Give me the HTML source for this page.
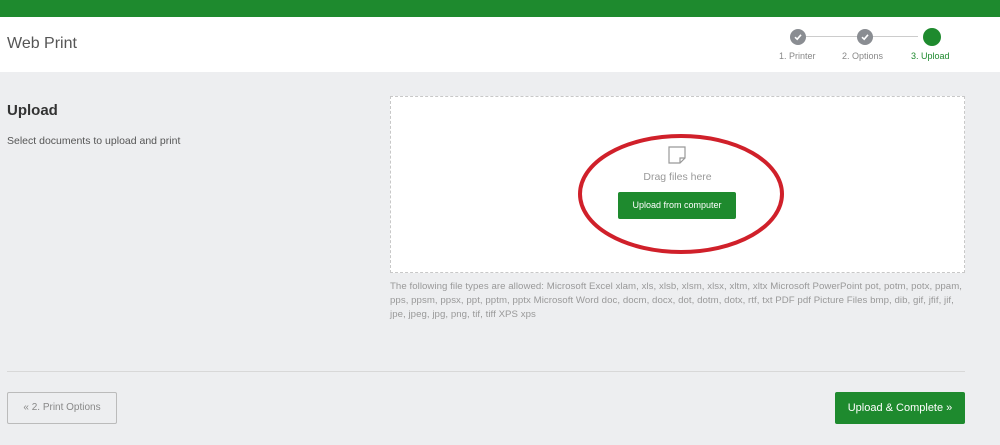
<!DOCTYPE html>
<html><head><style>
*{margin:0;padding:0;box-sizing:border-box}
body{width:1000px;height:445px;background:#edeef0;font-family:"Liberation Sans",sans-serif;position:relative;overflow:hidden;color:#333}
.top{position:absolute;left:0;top:0;width:1000px;height:17px;background:#1e8a2e}
.hdr{position:absolute;left:0;top:17px;width:1000px;height:55px;background:#fff}
.abs{position:absolute}
.dot{position:absolute;width:16px;height:16px;border-radius:50%;background:#8a8d92;top:29px}
.dot svg{position:absolute;left:3px;top:3px}
.lbl{position:absolute;top:51px;font-size:9px;color:#888}
.drop{position:absolute;left:390px;top:96px;width:575px;height:177px;background:#fff;border:1px dashed #c8c8c8}
.ft{position:absolute;left:390px;top:279px;width:600px;font-size:8.9px;line-height:14px;color:#999;white-space:nowrap;letter-spacing:0.05px}
.ft span{display:inline-block;transform-origin:0 0;transform:scaleX(1.085)}
.btn{position:absolute;border-radius:2px;font-size:11px;text-align:center}
</style></head><body>
<div class="top"></div>
<div class="hdr"></div>
<div class="abs" style="left:7px;top:35px;font-size:16px;color:#555">Web Print</div>
<div class="abs" style="left:806px;top:36px;width:112px;height:1px;background:#ccc"></div>
<div class="dot" style="left:790px"><svg width="10" height="10" viewBox="0 0 10 10"><path d="M2 5.2 L4.2 7.2 L8 2.8" stroke="#fff" stroke-width="1.6" fill="none"/></svg></div>
<div class="dot" style="left:857px"><svg width="10" height="10" viewBox="0 0 10 10"><path d="M2 5.2 L4.2 7.2 L8 2.8" stroke="#fff" stroke-width="1.6" fill="none"/></svg></div>
<div class="dot" style="left:923px;background:#1e8a2e;top:28px;width:18px;height:18px"></div>
<div class="lbl" style="left:779px">1. Printer</div>
<div class="lbl" style="left:842px">2. Options</div>
<div class="lbl" style="left:911px;color:#1e8a2e">3. Upload</div>
<div class="abs" style="left:7px;top:102px;font-size:15px;font-weight:bold;color:#333">Upload</div>
<div class="abs" style="left:7px;top:135px;font-size:10.5px;color:#555">Select documents to upload and print</div>
<div class="drop"></div>
<svg class="abs" style="left:668px;top:146px" width="20" height="20" viewBox="0 0 20 20"><path d="M1 1 H17 V12 L12 17 H1 Z M12 17 V12 H17" stroke="#999" stroke-width="1.2" fill="none"/></svg>
<div class="abs" style="left:600px;top:171px;width:155px;text-align:center;font-size:10.5px;color:#999">Drag files here</div>
<div class="btn" style="left:618px;top:192px;width:118px;height:27px;line-height:27px;background:#1e8a2e;color:#fff;font-size:9px">Upload from computer</div>
<svg class="abs" style="left:570px;top:128px" width="225" height="135"><ellipse cx="111" cy="66" rx="101" ry="58" stroke="#d0202a" stroke-width="4" fill="none"/></svg>
<div class="ft"><span>The following file types are allowed: Microsoft Excel xlam, xls, xlsb, xlsm, xlsx, xltm, xltx Microsoft PowerPoint pot, potm, potx, ppam,</span><br><span>pps, ppsm, ppsx, ppt, pptm, pptx Microsoft Word doc, docm, docx, dot, dotm, dotx, rtf, txt PDF pdf Picture Files bmp, dib, gif, jfif, jif,</span><br><span>jpe, jpeg, jpg, png, tif, tiff XPS xps</span></div>
<div class="abs" style="left:7px;top:371px;width:958px;height:1px;background:#d8d8d8"></div>
<div class="btn" style="left:7px;top:392px;width:110px;height:32px;line-height:30px;border:1px solid #bbb;color:#888;font-size:10px">« 2. Print Options</div>
<div class="btn" style="left:835px;top:392px;width:130px;height:32px;line-height:32px;background:#1e8a2e;color:#fff">Upload &amp; Complete »</div>
</body></html>
